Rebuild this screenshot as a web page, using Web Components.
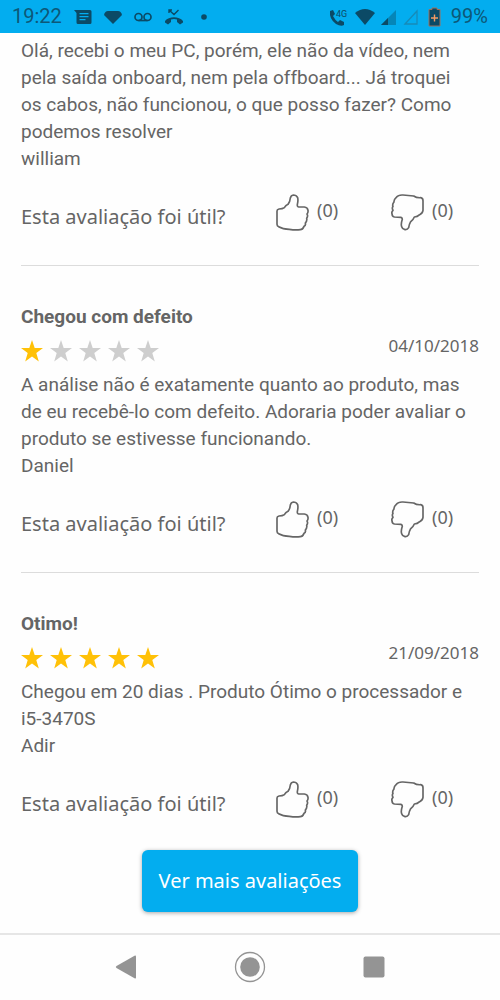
<!DOCTYPE html>
<html lang="pt-BR">
<head>
<meta charset="utf-8">
<meta name="viewport" content="width=device-width, initial-scale=1">
<title>Avaliações</title>
<style>
body { margin: 0; background: #fefefe; color: #656565; font-family: Roboto, "Liberation Sans", sans-serif; }
</style>
</head>
<body>
<reviews-page></reviews-page>
<script>
const define = (name, html, setup) => {
  const template = document.createElement('template');
  template.innerHTML = html;
  customElements.define(name, class extends HTMLElement {
    connectedCallback() {
      if (this.shadowRoot) return;
      this.attachShadow({ mode: 'open' }).append(template.content.cloneNode(true));
      if (setup) setup(this, this.shadowRoot);
    }
  });
};

define('status-bar', `
<style>
:host { display: flex; justify-content: space-between; align-items: center; height: 33px; padding: 0 12px; background: #03adef; color: #0b4a66; font-size: 20px; line-height: 33px; }
div { display: flex; align-items: center; }
.left { gap: 12px; }
.right { gap: 6px; }
time, .right span { color: #0d5878; }
svg { display: block; fill: currentColor; }
</style>
<div class="left">
  <time>19:22</time>
  <svg width="18" height="18" viewBox="0 0 18 18"><path fill-rule="evenodd" d="M0 2h16q1.500 0 1.500 1.500v11q0 1.500-1.500 1.500H4q-1.500 0-1.500-1.500V5zM5.500 5v1.300h9V5zM5.500 8v1.300h9V8zM5.500 11v1.300h6V11z"/></svg>
  <svg width="18" height="18" viewBox="0 0 18 18"><path d="M0 7Q1 3 4 3h10q3 0 4 4l-9 9z"/></svg>
  <svg width="18" height="18" viewBox="0 0 18 18"><g fill="none" stroke="currentColor" stroke-width="1.700"><circle cx="4.500" cy="9" r="3.500"/><circle cx="13.500" cy="9" r="3.500"/><path d="M4.500 12.500h9"/></g></svg>
  <svg width="20" height="18" viewBox="0 0 20 18"><path d="M5 2l5 4.500L14.500 2M5 5V2h3" fill="none" stroke="currentColor" stroke-width="1.400"/><path d="M1 13c4-5 14-5 18 0v1.500l-3 2-3-2.500v-2.500q-3-1-6 0V14l-3 2.500-3-2z"/></svg>
  <svg width="18" height="18" viewBox="0 0 18 18"><circle cx="8" cy="9" r="2.800"/></svg>
</div>
<div class="right">
  <svg width="20" height="20" viewBox="0 0 20 20"><path d="M1 4l3-1 2 4-2 2q2 4 5 6l2-2 4 2v3q-3 2-8-1Q0 12 1 4z"/><text x="7" y="10" font-size="9" font-family="Roboto, sans-serif">4G</text></svg>
  <svg width="20" height="18" viewBox="0 0 20 18"><path d="M0 5q10-8 20 0L10 17z"/></svg>
  <svg width="16" height="18" viewBox="0 0 16 18"><path opacity=".4" d="M0 17L15 2v15z"/><path d="M0 17l7-7v7z"/></svg>
  <svg width="16" height="18" viewBox="0 0 16 18"><path fill="none" stroke="#178bb8" stroke-width="1.300" d="M2 16L14 3v13z"/></svg>
  <svg width="20" height="20" viewBox="0 0 20 20"><path stroke="#9b705f" stroke-width="1" d="M7 2.500V1h5v1.500h3V19H4V2.500z"/><path fill="none" stroke="#f39a63" stroke-width="1.400" d="M6 11h7M9.500 7.500v7"/></svg>
  <span>99%</span>
</div>`);

define('star-rating', `
<style>
:host { display: flex; gap: 7px; }
svg { display: block; fill: #cecece; }
svg.on { fill: #ffc107; }
</style>`, (host, root) => {
  const value = Number(host.getAttribute('value'));
  host.setAttribute('role', 'img');
  host.setAttribute('aria-label', value + ' de 5 estrelas');
  for (let i = 0; i < 5; i++) {
    root.innerHTML += `<svg class="${i < value ? 'on' : ''}" width="22" height="22" viewBox="0 0 22 22"><path d="M11 0l2.700 8H22l-6.700 5 2.500 8.500L11 16.500l-6.800 5L6.700 13 0 8h8.300z"/></svg>`;
  }
});

define('vote-button', `
<style>
:host { display: block; }
button { display: flex; gap: 8px; align-items: flex-start; padding: 0; border: 0; background: none; color: inherit; font: 18px/32px "Noto Sans", "Open Sans", sans-serif; cursor: pointer; }
svg { display: block; fill: none; stroke: #666; stroke-width: 5; stroke-linejoin: round; }
:host([kind="up"]) .down, :host([kind="down"]) .up { display: none; }
</style>
<button type="button">
  <svg width="33" height="37" viewBox="0 0 99 111">
    <path class="up" d="M3 51Q3 46 9 45Q20 45 25 41Q29 34 36 31Q42 24 43 12Q45 4 52 3Q61 3 65 11Q67 18 64 32Q63 38 68 39L85 39Q95 40 96 49Q97 56 93 60Q97 66 92 73Q94 80 88 87Q90 94 84 97Q80 107 73 107Q58 109 40 106Q20 105 8 98Q3 96 3 91Z"/>
    <path class="down" d="M16 10Q22 2 36 3L68 6Q77 12 89 11Q96 12 96 20L96 49Q95 58 86 62Q79 69 70 69Q66 79 59 83Q54 92 53 101Q49 108 42 107Q34 105 32 98Q29 91 34 76Q34 71 30 70L10 69Q3 67 3 59Q1 54 6 49Q2 43 6 37Q3 31 9 24Q8 17 16 10Z"/>
  </svg>
  <slot></slot>
</button>`, (host, root) => {
  root.querySelector('button').setAttribute('aria-label', host.getAttribute('kind') === 'up' ? 'Sim, foi útil (0)' : 'Não foi útil (0)');
});

define('review-card', `
<style>
:host { display: block; padding: 37px 0 34px; border-bottom: 1px solid #dcdcdc; }
:host([partial]) { padding-top: 4px; }
:host([last]) { padding-bottom: 32px; border-bottom: 0; }
h2 { margin: 0; font-size: 19px; line-height: 27px; font-weight: 700; }
.meta { display: flex; justify-content: space-between; align-items: flex-start; height: 41px; }
star-rating { padding-top: 10px; }
time { font: 17px/32px "Noto Sans", "Open Sans", sans-serif; }
.text { padding-right: 10px; font-size: 19px; line-height: 27px; }
p { margin: 0; }
.useful { display: grid; grid-template-columns: 255fr 115fr 88fr; padding-top: 22px; align-items: start; }
.question { font: 20px/46px "Noto Sans", "Open Sans", sans-serif; height: 36px; white-space: nowrap; }
</style>
<div class="head"><h2></h2><div class="meta"></div></div>
<div class="text"><p><slot></slot></p><p class="author"></p></div>
<div class="useful"><span class="question">Esta avaliação foi útil?</span><vote-button kind="up">(0)</vote-button><vote-button kind="down">(0)</vote-button></div>`, (host, root) => {
  root.querySelector('.author').textContent = host.getAttribute('author');
  if (host.hasAttribute('partial')) { root.querySelector('.head').remove(); return; }
  root.querySelector('h2').textContent = host.getAttribute('heading');
  root.querySelector('.meta').innerHTML = `<star-rating value="${host.getAttribute('rating')}"></star-rating><time>${host.getAttribute('date')}</time>`;
});

define('more-button', `
<style>
:host { display: flex; justify-content: center; }
button { padding: 0 17px; border: 0; border-radius: 6px; background: #03adef; color: #fff; font: 20px/62px "Noto Sans", "Open Sans", sans-serif; box-shadow: 0 1px 4px rgba(0,0,0,.35); cursor: pointer; }
</style>
<button type="button"><slot></slot></button>`);

define('nav-bar', `
<style>
:host { display: grid; grid-template-columns: repeat(3, 124px); justify-content: center; height: 63px; padding-bottom: 2px; border-top: 2px solid #e6e6e6; }
button { display: flex; align-items: center; justify-content: center; padding: 0; border: 0; background: none; color: #949494; }
svg { display: block; fill: currentColor; }
</style>
<button type="button" aria-label="Voltar"><svg width="32" height="32" viewBox="0 0 32 32"><path d="M26 5.500v21q0 1.500-1.500.700L6.500 17q-1.500-1 0-2l18-10.200q1.500-.800 1.500.700z"/></svg></button>
<button type="button" aria-label="Início"><svg width="32" height="32" viewBox="0 0 32 32"><circle cx="16" cy="16" r="14.500" fill="none" stroke="currentColor" stroke-width="1.300"/><circle cx="16" cy="16" r="9.800"/></svg></button>
<button type="button" aria-label="Recentes"><svg width="32" height="32" viewBox="0 0 32 32"><rect x="5.500" y="5.500" width="21" height="21" rx="2"/></svg></button>`);

define('reviews-page', `
<style>
:host { display: flex; flex-direction: column; min-height: 100vh; }
main { flex: 1; padding: 0 21px 20px; }
</style>
<status-bar></status-bar>
<main>
  <review-card partial author="william">Olá, recebi o meu PC, porém, ele não da vídeo, nem pela saída onboard, nem pela offboard... Já troquei os cabos, não funcionou, o que posso fazer? Como podemos resolver</review-card>
  <review-card heading="Chegou com defeito" rating="1" date="04/10/2018" author="Daniel">A análise não é exatamente quanto ao produto, mas de eu recebê-lo com defeito. Adoraria poder avaliar o produto se estivesse funcionando.</review-card>
  <review-card last heading="Otimo!" rating="5" date="21/09/2018" author="Adir">Chegou em 20 dias . Produto Ótimo o processador e i5-3470S</review-card>
  <more-button>Ver mais avaliações</more-button>
</main>
<nav-bar></nav-bar>`);
</script>
</body>
</html>
